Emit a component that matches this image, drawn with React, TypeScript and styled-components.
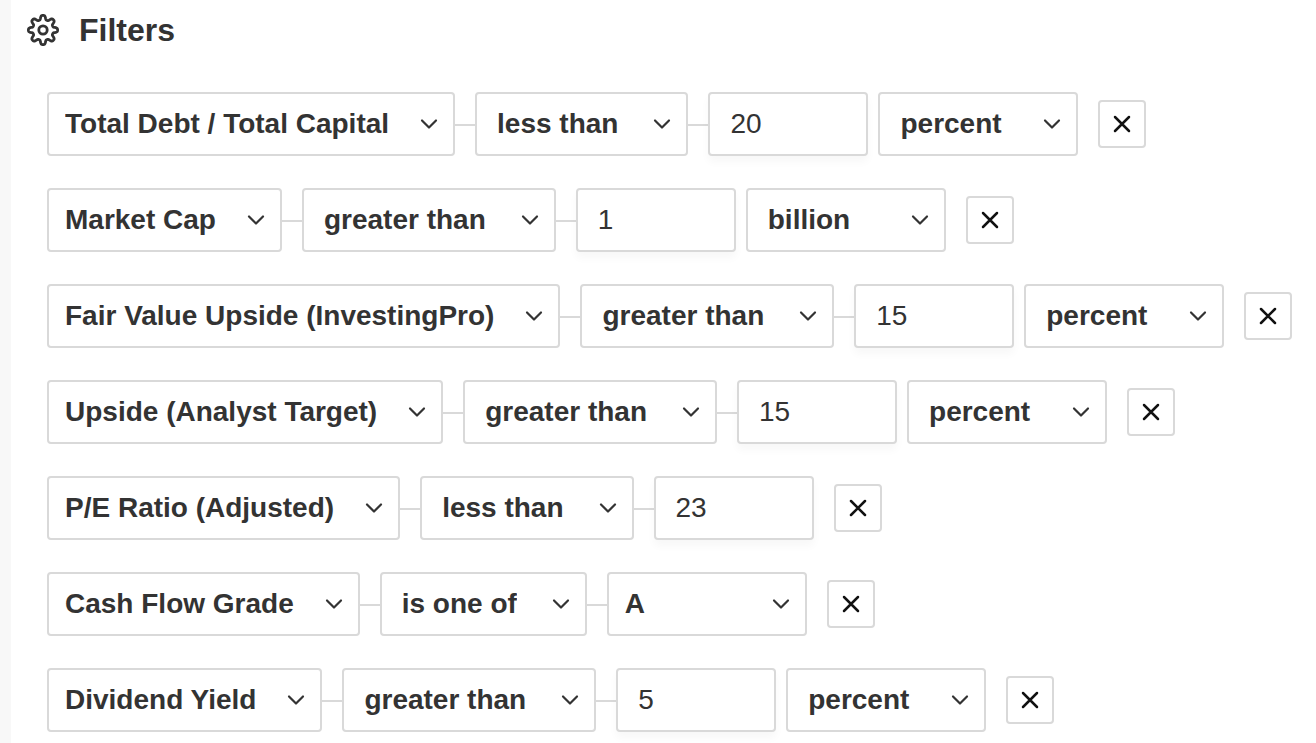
import React from "react";
import styled, { createGlobalStyle, css } from "styled-components";

const GlobalStyle = createGlobalStyle`
  *, *::before, *::after { box-sizing: border-box; }
  body {
    margin: 0;
    background: #fff;
    color: #333;
    font-family: "Liberation Sans", Arial, Helvetica, sans-serif;
  }
`;

const Page = styled.main`
  min-height: 100vh;
  padding: 8px 0 11px 16px;
  border-left: 11px solid #f8f8f8;
`;

const Header = styled.header`
  display: flex;
  align-items: center;
  gap: 20px;
  height: 44px;
`;

const Title = styled.h1`
  margin: 0;
  font-size: 32px;
  line-height: 44px;
  font-weight: 700;
`;

const FilterList = styled.ul`
  display: flex;
  flex-direction: column;
  gap: 32px;
  margin: 40px 0 0;
  padding: 0 0 0 20px;
  list-style: none;
`;

const FilterRow = styled.li`
  display: flex;
  align-items: center;
  height: 64px;
`;

const Connector = styled.span`
  flex: none;
  width: 20px;
  height: 2px;
  margin-top: 2px;
  background: #d9d9d9;
`;

const control = css`
  height: 64px;
  border: 2px solid #d9d9d9;
  border-radius: 4px;
  background: #fff;
  color: #333;
  font-family: inherit;
  font-size: 28px;
`;

const SelectBox = styled.label`
  position: relative;
  flex: none;
  display: block;
`;

const Select = styled.select<{ $inset: number; $end: number; $fixed?: boolean }>`
  ${control}
  display: block;
  appearance: none;
  field-sizing: content;
  margin: 0;
  padding: 0 ${(p) => p.$end}px 2px ${(p) => p.$inset}px;
  font-weight: 700;
  ${(p) => p.$fixed && "width: 200px;"}
`;

const ChevronIcon = styled.svg`
  position: absolute;
  top: 26px;
  right: 17px;
  width: 18px;
  height: 12px;
  pointer-events: none;
`;

const ValueInput = styled.input`
  ${control}
  flex: none;
  width: 160px;
  padding: 0 18px 0 20px;
  box-shadow: 0 6px 8px rgba(0, 0, 0, 0.03);
`;

const UnitGap = styled.span`
  flex: none;
  width: 10px;
`;

const RemoveButton = styled.button`
  flex: none;
  display: flex;
  align-items: center;
  justify-content: center;
  width: 48px;
  height: 48px;
  margin-left: 20px;
  padding: 0;
  border: 2px solid #d9d9d9;
  border-radius: 4px;
  background: #fff;
`;

function gearPath() {
  const points: string[] = [];
  for (let i = 0; i < 240; i++) {
    const angle = (i / 240) * Math.PI * 2;
    const wave = Math.tanh(1.6 * Math.cos(8 * angle)) / Math.tanh(1.6);
    const radius = 12.5 + 2.1 * wave;
    points.push(
      `${(17 + radius * Math.sin(angle)).toFixed(2)} ${(17 - radius * Math.cos(angle)).toFixed(2)}`
    );
  }
  return `M${points.join("L")}Z`;
}

function Gear() {
  return (
    <svg width="32" height="32" viewBox="1 1 32 32" fill="none" stroke="#333" strokeWidth="2.8" strokeLinejoin="round" aria-hidden="true">
      <path d={gearPath()} />
      <circle cx="17" cy="17" r="4.2" />
    </svg>
  );
}

type DropdownProps = {
  label: string;
  value: string;
  options: string[];
  inset: number;
  end: number;
  fixed?: boolean;
};

function Dropdown({ label, value, options, inset, end, fixed }: DropdownProps) {
  return (
    <SelectBox>
      <Select aria-label={label} defaultValue={value} $inset={inset} $end={end} $fixed={fixed}>
        {options.map((o) => (
          <option key={o}>{o}</option>
        ))}
      </Select>
      <ChevronIcon viewBox="0 0 18 12" fill="none" stroke="#333" strokeWidth="2.2" strokeLinecap="round" strokeLinejoin="round" aria-hidden="true">
        <path d="M2 2.5l7 7 7-7" />
      </ChevronIcon>
    </SelectBox>
  );
}

type Filter = {
  metric: string;
  operator: string;
  value?: string;
  unit?: string;
  grade?: string;
};

const filters: Filter[] = [
  { metric: "Total Debt / Total Capital", operator: "less than", value: "20", unit: "percent" },
  { metric: "Market Cap", operator: "greater than", value: "1", unit: "billion" },
  { metric: "Fair Value Upside (InvestingPro)", operator: "greater than", value: "15", unit: "percent" },
  { metric: "Upside (Analyst Target)", operator: "greater than", value: "15", unit: "percent" },
  { metric: "P/E Ratio (Adjusted)", operator: "less than", value: "23" },
  { metric: "Cash Flow Grade", operator: "is one of", grade: "A" },
  { metric: "Dividend Yield", operator: "greater than", value: "5", unit: "percent" },
];

const metrics = filters.map((f) => f.metric);
const operators = ["less than", "greater than", "is one of"];

export default function App() {
  return (
    <>
      <GlobalStyle />
      <Page>
        <Header>
          <Gear />
          <Title>Filters</Title>
        </Header>
        <FilterList>
          {filters.map((f) => (
            <FilterRow key={f.metric}>
              <Dropdown label="Metric" value={f.metric} options={metrics} inset={16} end={64} />
              <Connector />
              <Dropdown label="Condition" value={f.operator} options={operators} inset={20} end={68} />
              <Connector />
              {f.value && <ValueInput aria-label={`${f.metric} value`} defaultValue={f.value} />}
              {f.unit && (
                <>
                  <UnitGap />
                  <Dropdown label="Unit" value={f.unit} options={[f.unit]} inset={20} end={40} fixed />
                </>
              )}
              {f.grade && <Dropdown label="Grade" value={f.grade} options={["A", "B", "C"]} inset={16} end={40} fixed />}
              <RemoveButton type="button" aria-label={`Remove ${f.metric}`}>
                <svg width="18" height="18" viewBox="0 0 18 18" fill="none" stroke="#111" strokeWidth="2.5" strokeLinecap="round" aria-hidden="true">
                  <path d="M2 2l14 14M16 2L2 16" />
                </svg>
              </RemoveButton>
            </FilterRow>
          ))}
        </FilterList>
      </Page>
    </>
  );
}
